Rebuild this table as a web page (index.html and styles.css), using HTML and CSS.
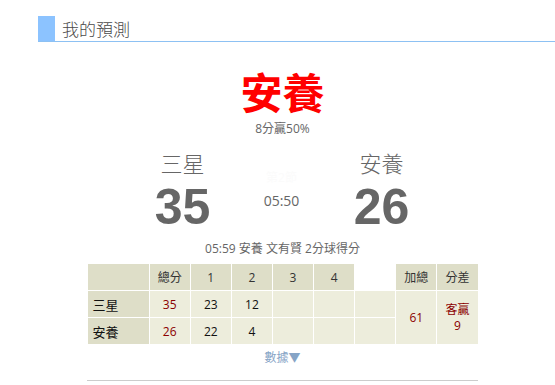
FILE: index.html
```html
<!DOCTYPE html>
<html lang="zh-Hant">
<head>
<meta charset="utf-8">
<title>我的預測</title>
<link rel="stylesheet" href="styles.css">
</head>
<body>
<div class="page">
  <div class="section-head">
    <span class="bar"></span>
    <h2 class="title">我的預測</h2>
  </div>
  <div class="content">
    <div class="pick">安養</div>
    <div class="pick-sub">8分贏50%</div>
    <div class="board">
      <div class="team">三星</div>
      <div class="middle">
        <span class="period">第2節</span>
        <span class="clock">05:50</span>
      </div>
      <div class="team">安養</div>
      <div class="score">35</div>
      <div class="score">26</div>
    </div>
    <div class="play">05:59 安養 文有賢 2分球得分</div>
    <table class="box">
      <colgroup>
        <col class="c-label"><col><col><col><col><col><col><col><col>
      </colgroup>
      <thead>
        <tr>
          <th></th><th>總分</th><th>1</th><th>2</th><th>3</th><th>4</th><th class="ot">OT</th><th>加總</th><th>分差</th>
        </tr>
      </thead>
      <tbody>
        <tr>
          <th class="label">三星</th><td class="red">35</td><td>23</td><td>12</td><td></td><td></td><td></td>
          <td class="red" rowspan="2">61</td>
          <td class="red diff" rowspan="2">客贏<br>9</td>
        </tr>
        <tr>
          <th class="label">安養</th><td class="red">26</td><td>22</td><td>4</td><td></td><td></td><td></td>
        </tr>
      </tbody>
    </table>
    <div class="more">數據▼</div>
    <div class="rule"></div>
  </div>
</div>
</body>
</html>
```
FILE: styles.css
```css
html, body {
  margin: 0;
  padding: 0;
  background: #fff;
}
body {
  font-family: "Open Sans", "Noto Sans CJK TC", sans-serif;
  color: #666;
}
.page {
  padding-top: 16px;
}
.section-head {
  display: flex;
  margin-left: 38px;
  height: 25px;
  border-bottom: 1px solid #8dc1f3;
}
.bar {
  width: 17px;
  background: #8cc3ff;
}
.title {
  margin: 0 0 0 7px;
  font-size: 17px;
  font-weight: 300;
  line-height: 25px;
  color: #4a4a4a;
  font-family: "Noto Sans CJK TC", sans-serif;
}
.content {
  margin-left: 38px;
  width: 489px;
  display: flex;
  flex-direction: column;
  align-items: center;
}
.pick {
  margin-top: 18px;
  font-family: "Noto Sans CJK TC", sans-serif;
  font-size: 42px;
  line-height: 61px;
  font-weight: bold;
  color: #ff0000;
}
.pick-sub {
  margin-top: 0;
  font-size: 12px;
  line-height: 16px;
  color: #666;
}
.board {
  margin-top: 12px;
  display: grid;
  grid-template-columns: 99px 99px 101px;
  grid-template-rows: 26px 52px;
  row-gap: 6px;
  text-align: center;
}
.team {
  font-family: "Noto Sans CJK TC", sans-serif;
  font-size: 22px;
  line-height: 26px;
  font-weight: 300;
  color: #666;
}
.middle {
  grid-column: 2;
  grid-row: 1 / 3;
  display: flex;
  flex-direction: column;
  justify-content: flex-end;
  align-items: center;
  padding-bottom: 23px;
}
.period {
  font-size: 12px;
  line-height: 16px;
  margin-bottom: 6px;
  color: #fbfbfb;
}
.clock {
  font-size: 14px;
  line-height: 18px;
  color: #666;
}
.score {
  font-family: "Liberation Sans", Arial, sans-serif;
  font-size: 50px;
  line-height: 52px;
  font-weight: bold;
  color: #666;
}
.play {
  margin-top: 8px;
  font-size: 12px;
  line-height: 16px;
  color: #666;
}
.box {
  margin-top: 6px;
  border-collapse: collapse;
  table-layout: fixed;
  width: 392px;
  border: 1px solid #ccc;
  font-size: 12px;
  color: #222;
}
.box col {
  width: 41px;
}
.box col.c-label {
  width: 62px;
}
.box th, .box td {
  border: 1px solid #fff;
  height: 26px;
  padding: 0;
  text-align: center;
  font-weight: normal;
}
.box thead th {
  background: #dedec8;
  color: #333;
}
.box thead th.ot {
  background: #fff;
  color: #fff;
}
.box tbody th.label {
  background: #dedec8;
  text-align: left;
  padding-left: 5px;
  font-size: 13px;
  color: #111;
}
.box td {
  background: #ededdc;
  color: #111;
}
.box td.red {
  color: #8b0000;
}
.box td.diff {
  line-height: 16px;
}
.more {
  margin-top: 5px;
  font-size: 12px;
  line-height: 16px;
  color: #86a4c6;
}
.rule {
  margin-top: 14px;
  width: 391px;
  border-top: 1px solid #ccc;
}
```
